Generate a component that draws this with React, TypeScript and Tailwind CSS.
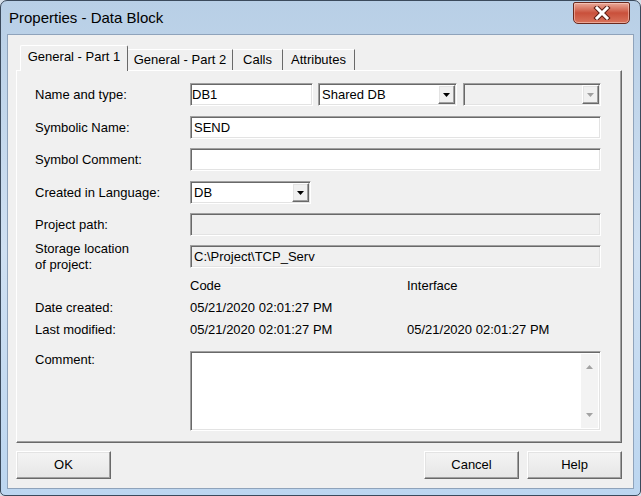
import React from "react";

const sunken =
  "border border-t-[#a0a0a0] border-l-[#a0a0a0] border-b-white border-r-white shadow-[inset_1px_1px_0_#696969,inset_-1px_-1px_0_#e3e3e3]";
const raised =
  "border border-t-white border-l-white border-b-[#696969] border-r-[#696969] shadow-[inset_-1px_-1px_0_#a0a0a0,inset_1px_1px_0_#e3e3e3]";

const Arrow = ({ up = false, color = "#000" }: { up?: boolean; color?: string }) => (
  <svg width="7" height="4" viewBox="0 0 7 4">
    <path d={up ? "M0 4h7L3.5 0z" : "M0 0h7L3.5 4z"} fill={color} />
  </svg>
);

const Combo = ({ text, className, disabled = false }: { text: string; className: string; disabled?: boolean }) => (
  <div className={`${sunken} ${className} h-[23px] flex p-[1px] ${disabled ? "bg-[#f0f0f0]" : "bg-white"}`}>
    <div className="flex-1 pl-[2px] leading-[19px] truncate">{text}</div>
    <div className={`${raised} w-[17px] h-full bg-[#f0f0f0] flex items-center justify-center`}>
      <Arrow color={disabled ? "#a0a0a0" : "#000"} />
    </div>
  </div>
);

const Field = ({ text = "", disabled = false }: { text?: string; disabled?: boolean }) => (
  <div className={`${sunken} flex-1 h-[23px] pl-[3px] leading-[21px] ${disabled ? "bg-[#f0f0f0]" : "bg-white"}`}>
    {text}
  </div>
);

const Row = ({ label, children, className = "" }: { label: React.ReactNode; children: React.ReactNode; className?: string }) => (
  <div className={`flex items-center h-[23px] ${className}`}>
    <div className="w-[155px] shrink-0 leading-[16px]">{label}</div>
    <div className="flex-1 flex">{children}</div>
  </div>
);

const TextRow = ({ label, code, iface }: { label: string; code: string; iface: string }) => (
  <div className="flex items-center h-[22px]">
    <div className="w-[155px] shrink-0">{label}</div>
    <div className="w-[217px] shrink-0">{code}</div>
    <div>{iface}</div>
  </div>
);

const Button = ({ label, className = "" }: { label: string; className?: string }) => (
  <div className={`${raised} w-[95px] h-[28px] flex items-center justify-center bg-gradient-to-b from-[#f4f4f4] to-[#e6e6e6] ${className}`}>
    {label}
  </div>
);

const tabs = [
  { label: "General - Part 1", w: "w-[108px]" },
  { label: "General - Part 2", w: "w-[105px]" },
  { label: "Calls", w: "w-[50px]" },
  { label: "Attributes", w: "w-[72px]" },
];

export default function App() {
  return (
    <div className="w-[641px] h-[496px] bg-[#d6e0ea] font-['Liberation_Sans',Arial,sans-serif] text-[13px] text-black">
      <div className="h-full flex flex-col rounded-t-[7px] rounded-b-[5px] border border-[#3b4a5c] bg-gradient-to-b from-[#b8cfe6] via-[#cfe0f2] to-[#bcd6f0] px-[6px] pb-[6px]">
        {/* title bar */}
        <div className="h-[33px] flex items-start justify-between">
          <div className="pl-[2px] pt-[7px] text-[15px] leading-[20px] text-[#000]">
            Properties - Data Block
          </div>
          <div className="mr-[4px] mt-[1px] w-[57px] h-[22px] rounded-b-[5px] rounded-t-[2px] border border-[#6b2a1e] bg-gradient-to-b from-[#e9a999] via-[#c9503b] to-[#d8735c] shadow-[inset_0_0_0_1px_rgba(255,220,210,0.5)] flex items-center justify-center">
            <svg width="18" height="14" viewBox="0 0 18 14">
              <path d="M4 2l10 10M14 2L4 12" stroke="#5a1d12" strokeWidth="5" strokeLinecap="square" />
              <path d="M4 2l10 10M14 2L4 12" stroke="#ffffff" strokeWidth="3" strokeLinecap="square" />
            </svg>
          </div>
        </div>

        {/* client area */}
        <div className="flex-1 border border-[#8fa3bb] bg-[#f0f0f0] flex flex-col pl-[8px] pr-[10px]">
          {/* tabs */}
          <div className="mt-[10px] h-[25px] flex items-end pl-[4px] relative z-10">
            {tabs.map((t, i) =>
              i === 0 ? (
                <div
                  key={t.label}
                  className={`${t.w} h-[26px] -mb-px bg-[#f0f0f0] border-t border-l border-white border-r border-r-[#696969] rounded-t-[2px] flex items-center justify-center pb-[3px]`}
                >
                  {t.label}
                </div>
              ) : (
                <div
                  key={t.label}
                  className={`${t.w} h-[21px] border-t border-white border-r border-r-[#696969] flex items-center justify-center`}
                >
                  {t.label}
                </div>
              )
            )}
          </div>

          {/* panel */}
          <div className="w-[606px] h-[373px] border border-t-white border-l-white border-b-[#696969] border-r-[#696969] shadow-[inset_-1px_-1px_0_#a0a0a0] pl-[18px] pr-[20px] pt-[12px] flex flex-col">
            <Row label="Name and type:">
              <div className={`${sunken} w-[123px] h-[23px] bg-white pl-[1px] leading-[21px]`}>DB1</div>
              <Combo text="Shared DB" className="ml-[5px] w-[139px]" />
              <Combo text="" className="ml-[6px] flex-1" disabled />
            </Row>
            <Row label="Symbolic Name:" className="mt-[10px]">
              <Field text="SEND" />
            </Row>
            <Row label="Symbol Comment:" className="mt-[9px]">
              <Field />
            </Row>
            <Row label="Created in Language:" className="mt-[10px]">
              <Combo text="DB" className="w-[121px]" />
            </Row>
            <Row label="Project path:" className="mt-[9px]">
              <Field disabled />
            </Row>
            <Row
              label={
                <>
                  Storage location
                  <br />
                  of project:
                </>
              }
              className="mt-[9px]"
            >
              <Field text={"C:\\Project\\TCP_Serv"} disabled />
            </Row>
            <div className="mt-[7px]">
              <TextRow label="" code="Code" iface="Interface" />
              <TextRow label="Date created:" code="05/21/2020 02:01:27 PM" iface="" />
              <TextRow label="Last modified:" code="05/21/2020 02:01:27 PM" iface="05/21/2020 02:01:27 PM" />
            </div>
            <div className="mt-[10px] flex items-start">
              <div className="w-[155px] shrink-0 pt-[1px] leading-[16px]">Comment:</div>
              <div className={`${sunken} flex-1 h-[80px] bg-white flex justify-end p-[2px]`}>
                <div className="w-[17px] h-full bg-[#f3f3f3] flex flex-col items-center justify-between py-[11px]">
                  <Arrow up color="#a3a3a3" />
                  <Arrow color="#a3a3a3" />
                </div>
              </div>
            </div>
          </div>

          {/* buttons */}
          <div className="mt-[8px] w-[606px] flex">
            <Button label="OK" />
            <Button label="Cancel" className="ml-auto" />
            <Button label="Help" className="ml-[8px]" />
          </div>
        </div>
      </div>
    </div>
  );
}
